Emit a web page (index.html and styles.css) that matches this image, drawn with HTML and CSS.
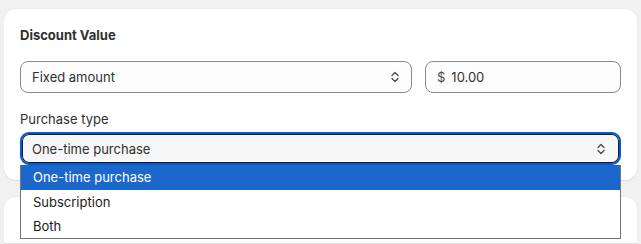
FILE: index.html
```html
<!DOCTYPE html>
<html>
<head>
<meta charset="utf-8">
<link rel="stylesheet" href="styles.css">
</head>
<body>
<div class="page">
  <section class="card">
    <h2 class="title">Discount Value</h2>
    <div class="row">
      <div class="field select">
        <span>Fixed amount</span>
        <svg class="chev" width="10" height="14" viewBox="0 0 10 14"><path d="M2 5.5 5 2.5 8 5.5M2 8.5 5 11.5 8 8.5" fill="none" stroke="#4a4a4a" stroke-width="1.3" stroke-linecap="round" stroke-linejoin="round"/></svg>
      </div>
      <div class="field money"><span class="cur">$</span><span>10.00</span></div>
    </div>
    <label class="label">Purchase type</label>
    <div class="selwrap">
      <div class="field select focused">
        <span>One-time purchase</span>
        <svg class="chev" width="10" height="14" viewBox="0 0 10 14"><path d="M2 5.5 5 2.5 8 5.5M2 8.5 5 11.5 8 8.5" fill="none" stroke="#4a4a4a" stroke-width="1.3" stroke-linecap="round" stroke-linejoin="round"/></svg>
      </div>
      <ul class="menu">
        <li class="opt active">One-time purchase</li>
        <li class="opt">Subscription</li>
        <li class="opt">Both</li>
      </ul>
    </div>
  </section>
  <section class="card card2"></section>
</div>
</body>
</html>
```

FILE: styles.css
```css
* { box-sizing: border-box; }
html, body { margin: 0; padding: 0; }
body {
  background: #f1f1f1;
  font-family: Inter, "Noto Sans", sans-serif;
  color: #303030;
  font-size: 13px;
  overflow: hidden;
  height: 244px;
}
.page { padding: 9px 4px 0 4px; }
.card {
  width: 633px;
  background: #fff;
  border-radius: 12px;
  padding: 16px 16px 15px 16px;
  box-shadow: 0 1px 0 rgba(26,26,26,0.07), 0 0 0 1px rgba(0,0,0,0.02);
}
.card2 { margin-top: 17px; height: 46px; border-radius: 12px 12px 0 0; }
.title {
  margin: 0;
  font-size: 13px;
  font-weight: 650;
  line-height: 20px;
  color: #303030;
}
.row {
  margin-top: 16px;
  display: grid;
  grid-template-columns: 392px 1fr;
  column-gap: 13px;
}
.field {
  height: 32px;
  border: 1px solid #8a8a8a;
  border-radius: 8px;
  background: #fdfdfd;
  display: flex;
  align-items: center;
  padding: 0 11px;
  font-size: 13px;
  color: #303030;
}
.select { justify-content: space-between; }
.money .cur { color: #4a4a4a; margin-right: 6px; }
.label {
  display: block;
  margin-top: 16px;
  line-height: 20px;
  color: #303030;
}
.selwrap { position: relative; margin-top: 3px; }
.focused {
  height: 33px;
  background: #f7f7f7;
  border: 2px solid #005bd3;
  box-shadow: inset 0 0 0 1px #1a1a1a;
  border-radius: 9px;
  padding: 0 13px 0 10px;
}
.menu {
  position: absolute;
  top: 33px;
  left: 0;
  right: 0;
  margin: 0;
  padding: 0;
  list-style: none;
  background: #fff;
  border: 1px solid #767676;
  border-top: none;
  z-index: 2;
}
.opt {
  height: 24px;
  line-height: 24px;
  padding-left: 12px;
  font-size: 13px;
  color: #1a1a1a;
}
.opt.active { height: 25px; line-height: 25px; background: #1b67cc; color: #fff; }
```
